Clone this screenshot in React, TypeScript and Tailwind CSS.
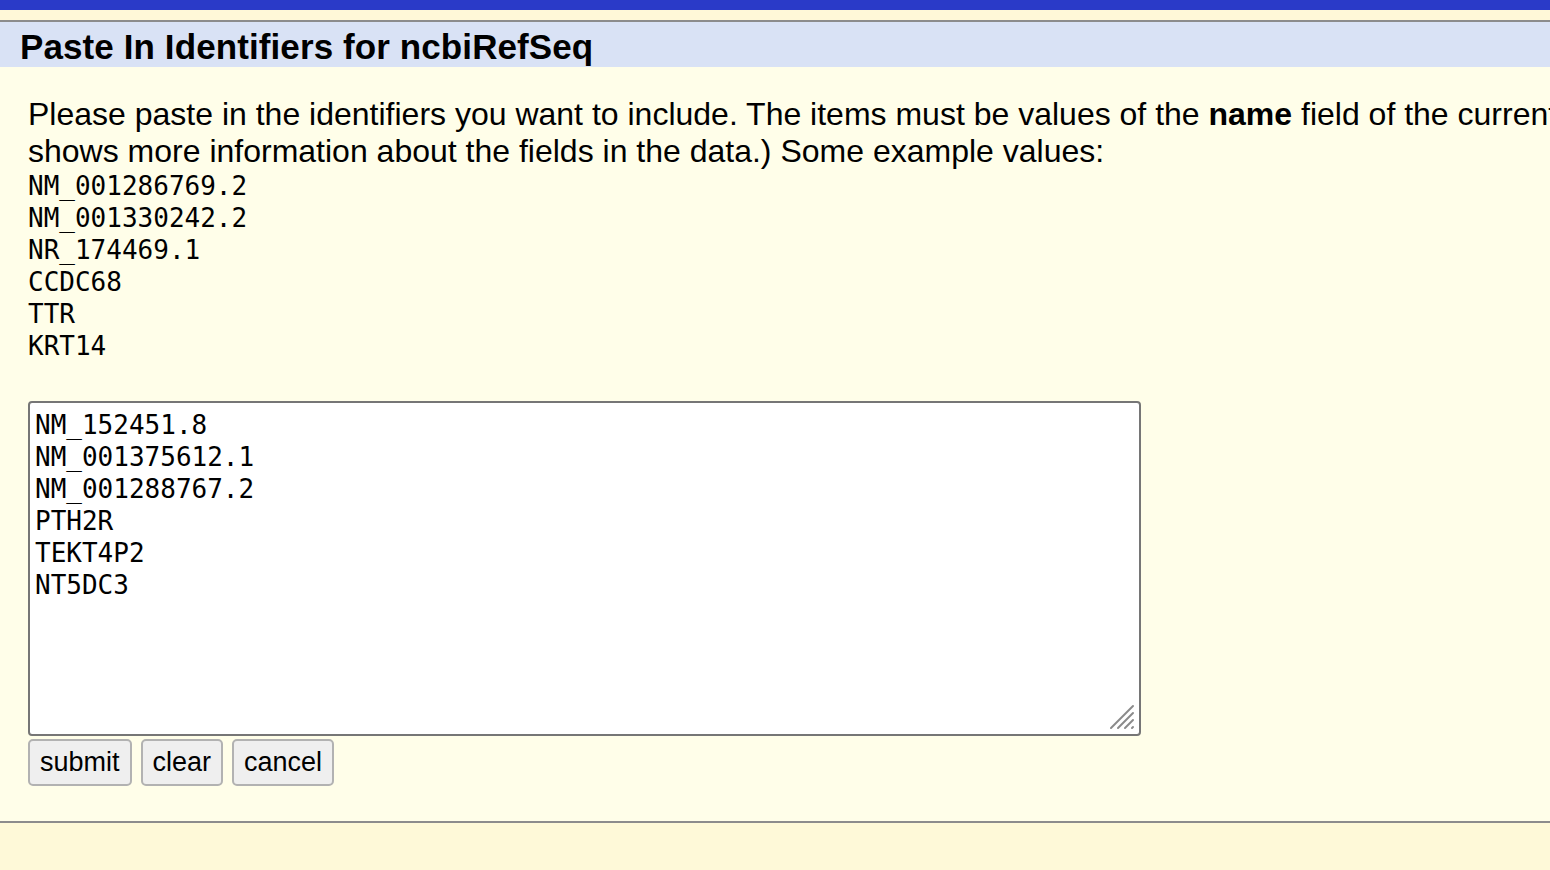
export default function App() {
  const examples = ['NM_001286769.2', 'NM_001330242.2', 'NR_174469.1', 'CCDC68', 'TTR', 'KRT14'];
  const pasted = 'NM_152451.8\nNM_001375612.1\nNM_001288767.2\nPTH2R\nTEKT4P2\nNT5DC3';

  return (
    <div className="h-[870px] w-full overflow-hidden bg-[#fef9d8] font-['Liberation_Sans',Arial,sans-serif] text-black">
      <div className="h-[10px] bg-[#2a3ac8]" />
      <div className="h-[10px] bg-[#fff8d8]" />
      <div className="h-[2px] bg-[#8c8c8c]" />
      <div className="flex h-[45px] items-center bg-[#d9e2f5] pl-[20px] pt-[3px]">
        <h1 className="text-[35px] font-bold leading-none tracking-[0.1px]">Paste In Identifiers for ncbiRefSeq</h1>
      </div>

      <div className="h-[754px] overflow-hidden whitespace-nowrap bg-[#fffee9] pl-[28px] pt-[29px]">
        <p className="text-[32px] leading-[37px]">
          Please paste in the identifiers you want to include. The items must be values of the <b>name</b> field of the current table. (The schema link
          <br />
          shows more information about the fields in the data.) Some example values:
        </p>
        <div className="font-['DejaVu_Sans_Mono',monospace] text-[26px] leading-[32px]">
          {examples.map((v) => (
            <div key={v}>{v}</div>
          ))}
        </div>

        <div className="relative mt-[39px] w-[1113px]">
          <textarea
            defaultValue={pasted}
            spellCheck={false}
            className="block h-[335px] w-full resize-none rounded-[4px] border-2 border-[#767676] bg-white px-[5px] pt-[6px] font-['DejaVu_Sans_Mono',monospace] text-[26px] leading-[32px] outline-none"
          />
          <svg className="pointer-events-none absolute bottom-[6px] right-[6px]" width="26" height="26" viewBox="0 0 26 26">
            <g stroke="#8a8a8a" strokeWidth="2" strokeLinecap="round">
              <line x1="2" y1="24" x2="24" y2="2" />
              <line x1="9" y1="24" x2="24" y2="9" />
              <line x1="16" y1="24" x2="24" y2="16" />
              <line x1="23" y1="24" x2="24" y2="23" />
            </g>
          </svg>
        </div>

        <div className="mt-[3px] flex gap-[9px]">
          {['submit', 'clear', 'cancel'].map((b) => (
            <button
              key={b}
              className="h-[47px] rounded-[5px] border-2 border-[#b2b2b2] bg-[#efefef] px-[10px] text-[27px] leading-none"
            >
              {b}
            </button>
          ))}
        </div>
      </div>

      <div className="h-[2px] bg-[#8c8c8c]" />
    </div>
  );
}
